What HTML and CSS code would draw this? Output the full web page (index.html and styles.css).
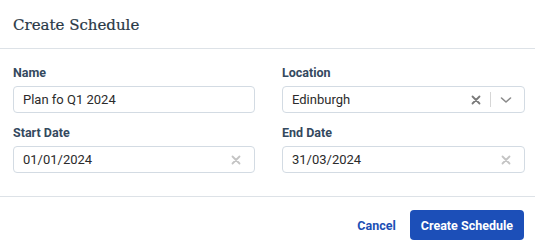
FILE: index.html
```html
<!DOCTYPE html>
<html lang="en">
<head>
  <meta charset="UTF-8">
  <title>Create Schedule</title>
  <link rel="stylesheet" href="styles.css">
</head>
<body>

  <div class="modal">
    <div class="modal-header">
      <h2>Create Schedule</h2>
    </div>

    <div class="modal-body">
      <div class="form-group">
        <label>Name</label>
        <div class="field">
          <input type="text" value="Plan fo Q1 2024">
        </div>
      </div>

      <div class="form-group">
        <label>Location</label>
        <div class="field select">
          <span class="value">Edinburgh</span>
          <span class="clear dark">
            <svg width="10" height="10" viewBox="0 0 10 10"><path d="M1.5 1.5 L8.5 8.5 M8.5 1.5 L1.5 8.5" stroke="currentColor" stroke-width="1.8" stroke-linecap="round"/></svg>
          </span>
          <span class="sep"></span>
          <span class="chevron">
            <svg width="12" height="8" viewBox="0 0 12 8"><path d="M1.5 2 L6 6 L10.5 2" fill="none" stroke="currentColor" stroke-width="1.6" stroke-linecap="round" stroke-linejoin="round"/></svg>
          </span>
        </div>
      </div>

      <div class="form-group">
        <label>Start Date</label>
        <div class="field">
          <input type="text" value="01/01/2024">
          <span class="clear">
            <svg width="10" height="10" viewBox="0 0 10 10"><path d="M1.5 1.5 L8.5 8.5 M8.5 1.5 L1.5 8.5" stroke="currentColor" stroke-width="1.8" stroke-linecap="round"/></svg>
          </span>
        </div>
      </div>

      <div class="form-group">
        <label>End Date</label>
        <div class="field">
          <input type="text" value="31/03/2024">
          <span class="clear">
            <svg width="10" height="10" viewBox="0 0 10 10"><path d="M1.5 1.5 L8.5 8.5 M8.5 1.5 L1.5 8.5" stroke="currentColor" stroke-width="1.8" stroke-linecap="round"/></svg>
          </span>
        </div>
      </div>
    </div>

    <div class="modal-footer">
      <button class="btn-link">Cancel</button>
      <button class="btn-primary">Create Schedule</button>
    </div>
  </div>

</body>
</html>
```

FILE: styles.css
```css
body {
  margin: 0;
  font-family: Roboto, "Liberation Sans", Arial, sans-serif;
  background: #fff;
  color: #333;
}
.modal {
  width: 535px;
  height: 251px;
  background: #fff;
}
.modal-header {
  height: 48px;
  border-bottom: 1px solid #dde2e7;
  padding: 0 13px;
  display: flex;
  align-items: center;
}
h2 {
  margin: 0;
  font-family: "DejaVu Serif", "Liberation Serif", serif;
  font-weight: normal;
  font-size: 15px;
  color: #2a3846;
  padding-top: 1px;
  -webkit-text-stroke: 0.2px #2a3846;
}
.modal-body {
  display: grid;
  grid-template-columns: 242px 243px;
  column-gap: 27px;
  row-gap: 11px;
  padding: 15px 10px 23px 13px;
  border-bottom: 1px solid #dde2e7;
}
label {
  display: block;
  font-weight: bold;
  font-size: 12.5px;
  color: #34495e;
  line-height: 18px;
  margin-bottom: 4px;
}
.field {
  display: flex;
  align-items: center;
  height: 25px;
  border: 1px solid #d3dbe3;
  border-radius: 4px;
  padding: 0 10px 0 9px;
  font-size: 13px;
}
.field input {
  flex: 1;
  min-width: 0;
  border: none;
  outline: none;
  padding: 0;
  font-family: inherit;
  font-size: 13px;
  color: #2b2b2b;
  background: transparent;
}
.select .value {
  flex: 1;
  color: #2b2b2b;
}
.clear {
  display: flex;
  color: #c4c4c4;
  margin-right: 3px;
}
.clear.dark {
  color: #7a7a7a;
  margin-right: 0;
}
.sep {
  width: 1px;
  height: 15px;
  background: #d6d6d6;
  margin: 0 9px;
}
.chevron {
  display: flex;
  color: #8a8a8a;
  margin-right: 2px;
}
.modal-footer {
  display: flex;
  justify-content: flex-end;
  align-items: center;
  gap: 14px;
  padding: 13px 11px 10px;
}
.btn-link {
  background: none;
  border: none;
  font-family: inherit;
  font-weight: bold;
  font-size: 12.5px;
  color: #1c4fb5;
  padding: 0;
  cursor: pointer;
}
.btn-primary {
  background-color: #1c4fb8;
  color: white;
  border: none;
  border-radius: 4px;
  font-family: inherit;
  font-weight: bold;
  font-size: 12.5px;
  height: 30px;
  padding: 0 11px;
  cursor: pointer;
}
```
